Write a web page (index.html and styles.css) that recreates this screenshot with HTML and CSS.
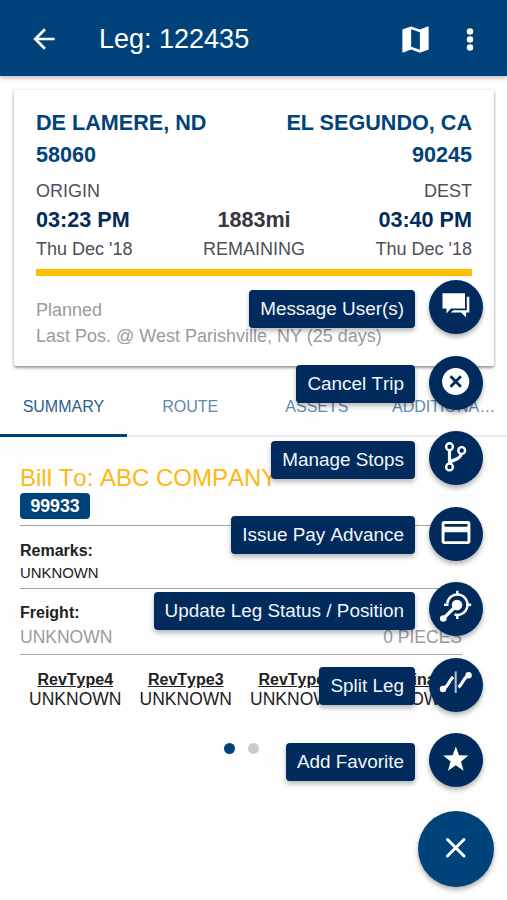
FILE: index.html
```html
<!DOCTYPE html>
<html lang="en">
<head>
    <meta charset="UTF-8">
    <meta name="viewport" content="width=device-width, initial-scale=1.0">
    <title>Leg: 122435</title>
    <link rel="stylesheet" href="styles.css">
</head>
<body>

<header class="toolbar">
    <svg class="icon-back" viewBox="0 0 24 24"><path d="M20 11H7.83l5.59-5.59L12 4l-8 8 8 8 1.41-1.41L7.83 13H20v-2z"/></svg>
    <h1>Leg: 122435</h1>
    <svg class="icon-map" viewBox="0 0 24 24"><path d="M20.5 3l-.16.03L15 5.1 9 3 3.36 4.9c-.21.07-.36.25-.36.48V20.5c0 .28.22.5.5.5l.16-.03L9 18.9l6 2.1 5.64-1.9c.21-.07.36-.25.36-.48V3.5c0-.28-.22-.5-.5-.5zM15 19l-6-2.11V5l6 2.11V19z"/></svg>
    <svg class="icon-more" viewBox="0 0 8 24"><circle cx="4" cy="4.500" r="3.200"/><circle cx="4" cy="12.500" r="3.200"/><circle cx="4" cy="20.500" r="3.200"/></svg>
</header>

<section class="card">
    <div class="row city"><span>DE LAMERE, ND</span><span>EL SEGUNDO, CA</span></div>
    <div class="row city"><span>58060</span><span>90245</span></div>
    <div class="row place"><span>ORIGIN</span><span>DEST</span></div>
    <div class="row time"><span>03:23 PM</span><span class="miles">1883mi</span><span>03:40 PM</span></div>
    <div class="row date"><span>Thu Dec '18</span><span>REMAINING</span><span>Thu Dec '18</span></div>
    <div class="progress"></div>
    <p class="position">Planned<br>Last Pos. @ West Parishville, NY (25 days)</p>
</section>

<nav class="tabs">
    <div class="tab active">SUMMARY</div>
    <div class="tab">ROUTE</div>
    <div class="tab">ASSETS</div>
    <div class="tab">ADDITIONA…</div>
</nav>

<main class="summary">
    <div class="bill">
        <h2>Bill To: ABC COMPANY</h2>
        <span class="badge">99933</span>
    </div>
    <div class="remarks">
        <h3>Remarks:</h3>
        <p>UNKNOWN</p>
    </div>
    <div class="freight">
        <h3>Freight:</h3>
        <div class="row"><span>UNKNOWN</span><span>0 PIECES</span></div>
    </div>
    <div class="types">
        <div><h4>RevType4</h4><p>UNKNOWN</p></div>
        <div><h4>RevType3</h4><p>UNKNOWN</p></div>
        <div><h4>RevType2</h4><p>UNKNOWN</p></div>
        <div><h4>Terminal</h4><p>UNKNOWN</p></div>
    </div>
    <div class="dots"><i class="on"></i><i></i></div>
</main>

<div class="speed-dial">
    <div class="action">
        <span class="label">Message User(s)</span>
        <span class="fab">
            <svg viewBox="0 0 54 54"><path class="fill" d="M13.500 13.300h22.500v15.200H22l-4.500 5v-5h-4z"/><path class="fill" d="M37.800 16.800h2.500v15.700h-3.200v5l-5-5H21.800l2.300-2.300h13.700z"/></svg>
        </span>
    </div>
    <div class="action">
        <span class="label">Cancel Trip</span>
        <span class="fab">
            <svg viewBox="0 0 54 54"><circle class="fill" cx="26.700" cy="25.500" r="13.600"/><path class="cut" d="M21.500 20.300l10.400 10.400M31.900 20.300L21.500 30.700"/></svg>
        </span>
    </div>
    <div class="action">
        <span class="label">Manage Stops</span>
        <span class="fab">
            <svg viewBox="0 0 54 54"><g class="line"><circle cx="20.500" cy="15.700" r="3.400"/><circle cx="20.500" cy="36" r="3.400"/><circle cx="32.700" cy="19.500" r="3.400"/></g><path class="line thick" d="M20.500 19.500v13M21 31.500c3.500-4 10-2 11.200-8.500"/></svg>
        </span>
    </div>
    <div class="action">
        <span class="label">Issue Pay Advance</span>
        <span class="fab">
            <svg viewBox="0 0 54 54"><path class="fill" fill-rule="evenodd" d="M15.300 14h23.400a2.700 2.700 0 0 1 2.700 2.700v17.600a2.700 2.700 0 0 1-2.700 2.700H15.300a2.700 2.700 0 0 1-2.700-2.700V16.700a2.700 2.700 0 0 1 2.700-2.700zM15.500 17v2.800h23v-2.800zM15.500 25.200v9.100h23v-9.100z"/></svg>
        </span>
    </div>
    <div class="action">
        <span class="label">Update Leg Status / Position</span>
        <span class="fab">
            <svg viewBox="0 0 54 54"><path class="line" d="M18.200 21.500a10.200 10.200 0 1 1 7.300 11"/><path class="line" d="M28.300 8.700v4.500M28.300 32v5M37.700 22.700h4.500M15 22.700h4.500"/><circle class="fill" cx="28" cy="23" r="5.300"/><path class="line thick" d="M27 24L14.500 36.300"/><circle class="fill" cx="14.300" cy="36.500" r="3.300"/></svg>
        </span>
    </div>
    <div class="action">
        <span class="label">Split Leg</span>
        <span class="fab">
            <svg viewBox="0 0 54 54"><path class="bar" d="M26.700 13.500v21.500"/><circle class="fill" cx="14" cy="31" r="3.200"/><circle class="fill" cx="39.600" cy="17.200" r="3.200"/><path class="line thick" d="M14.500 30.500c5.500-2.500 4.500-7 9.700-11.500M29.500 29.300c5-4 4.300-9 9.800-11.500"/></svg>
        </span>
    </div>
    <div class="action">
        <span class="label">Add Favorite</span>
        <span class="fab">
            <svg viewBox="0 0 54 54"><path class="fill" d="M26.800 13.500l3.200 8.800 9.400.3-7.400 5.800 2.600 9.300-7.800-5.400-7.800 5.400 2.600-9.300-7.400-5.800 9.400-.3z"/></svg>
        </span>
    </div>
    <div class="fab main">
        <svg viewBox="0 0 76 76"><path class="line" d="M29.500 28.500l16.500 16.500M46 28.500l-16.500 16.500"/></svg>
    </div>
</div>

</body>
</html>
```
FILE: styles.css
```css
body {
    font-family: "Liberation Sans", Arial, sans-serif;
    margin: 0;
    height: 900px;
    position: relative;
    overflow: hidden;
    background-color: #fefefe;
}

h1, h2, h3, h4, p {
    margin: 0;
}

.toolbar {
    display: flex;
    align-items: center;
    box-sizing: border-box;
    height: 76px;
    padding: 2px 33px 0 28px;
    background-color: #00437b;
    color: #fff;
    box-shadow: 0 2px 4px rgba(0, 0, 0, 0.25);
}

.toolbar h1 {
    flex: 1;
    margin-left: 39px;
    font-size: 27px;
    font-weight: normal;
    line-height: 30px;
}

.toolbar svg {
    fill: #fff;
}

.icon-back {
    width: 32px;
    height: 32px;
}

.icon-map {
    width: 35px;
    height: 35px;
    margin-right: 33px;
}

.icon-more {
    width: 8px;
    height: 24px;
}

.row {
    display: flex;
    justify-content: space-between;
}

.card {
    box-sizing: border-box;
    height: 276px;
    margin: 14px 13px 0 14px;
    padding: 17px 22px 0;
    background-color: #fff;
    border-radius: 2px;
    box-shadow: 0 2px 3px rgba(0, 0, 0, 0.38), 0 0 3px rgba(0, 0, 0, 0.12);
    color: #4e4e56;
    font-size: 18px;
}

.city {
    color: #00437b;
    font-size: 21.6px;
    font-weight: bold;
    line-height: 32.4px;
}

.place {
    margin-top: 7px;
    line-height: 24px;
}

.time {
    color: #002b5c;
    font-size: 21.6px;
    font-weight: bold;
    line-height: 33px;
}

.miles {
    color: #36363e;
}

.date {
    line-height: 26px;
}

.progress {
    height: 7px;
    margin-top: 7px;
    background-color: #fbc000;
}

.position {
    margin-top: 21px;
    color: #9b9b9f;
    line-height: 26px;
}

.tabs {
    display: flex;
    margin-top: 13px;
}

.tab {
    flex: 1;
    border-bottom: 2px solid #ebebeb;
    color: #5f8aae;
    font-size: 16px;
    line-height: 55px;
    text-align: center;
    padding-bottom: 1px;
}

.tab.active {
    border-bottom: 3px solid #00437b;
    color: #2b618f;
    padding-bottom: 0;
}

.summary {
    width: 442px;
    margin: 26px 0 0 20px;
    color: #222;
}

.bill,
.remarks,
.freight {
    box-sizing: border-box;
    border-bottom: 1.5px solid #a5a5a8;
}

.bill {
    height: 63px;
}

.bill h2 {
    color: #fdb913;
    font-size: 24px;
    font-weight: normal;
    font-kerning: none;
    line-height: 29px;
}

.badge {
    display: block;
    width: 70px;
    margin-top: 1px;
    border-radius: 4px;
    background-color: #00437b;
    color: #fff;
    font-size: 17.7px;
    font-weight: bold;
    line-height: 26px;
    text-align: center;
}

.summary h3 {
    font-size: 16px;
    line-height: 22px;
}

.remarks {
    height: 63px;
    padding-top: 14px;
}

.remarks p {
    font-size: 14.9px;
    line-height: 22px;
}

.freight {
    height: 66px;
    padding-top: 13px;
}

.freight .row {
    color: #9b9b9f;
    font-size: 17.5px;
    line-height: 26px;
}

.types {
    display: flex;
    margin-top: 15px;
    text-align: center;
}

.types div {
    flex: 1;
}

.types h4 {
    font-size: 16px;
    font-kerning: none;
    line-height: 20px;
    text-decoration: underline;
}

.types p {
    font-size: 17.5px;
    line-height: 18px;
}

.dots {
    display: flex;
    justify-content: center;
    gap: 13px;
    margin-top: 35px;
}

.dots i {
    width: 11px;
    height: 11px;
    border-radius: 50%;
    background-color: #cbcbcb;
}

.dots .on {
    background-color: #00437b;
}

/* floating menu over the page */
.speed-dial {
    position: absolute;
    top: 280px;
    right: 13px;
    display: flex;
    flex-direction: column;
    align-items: flex-end;
    gap: 21.5px;
}

.action {
    display: flex;
    align-items: center;
    gap: 14px;
    padding-right: 11px;
}

.label {
    margin-top: 3px;
    padding: 0 11px;
    border-radius: 4px;
    background-color: #002b5c;
    box-shadow: 0 3px 5px rgba(0, 0, 0, 0.28);
    color: #f2f5f8;
    font-size: 18.9px;
    font-kerning: none;
    line-height: 38px;
}

.fab {
    width: 54px;
    height: 54px;
    border-radius: 50%;
    background-color: #002b5c;
    box-shadow: 0 3px 5px rgba(0, 0, 0, 0.3);
}

.fab svg {
    display: block;
}

.fab.main {
    width: 76px;
    height: 76px;
    margin-top: 2px;
    background-color: #00437b;
}

.fill {
    fill: #fff;
}

.line {
    fill: none;
    stroke: #fff;
    stroke-width: 2.4;
}

.thick {
    stroke-width: 3.2;
}

.main .line {
    stroke-width: 3;
    stroke-linecap: round;
}

.cut {
    stroke: #002b5c;
    stroke-width: 2.8;
}

.bar {
    stroke: #b9c5d2;
    stroke-width: 2;
}
```
